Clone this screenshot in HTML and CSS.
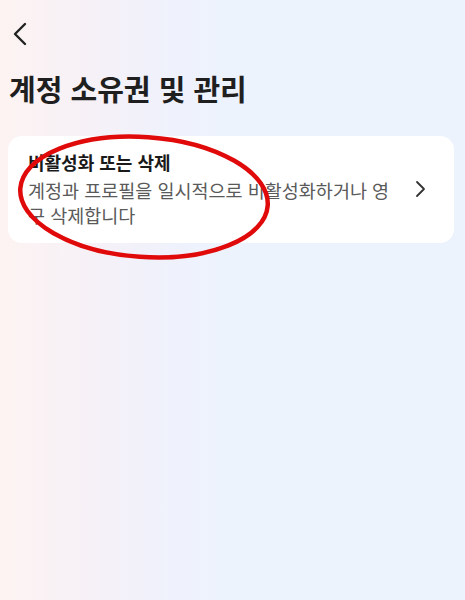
FILE: index.html
```html
<!DOCTYPE html>
<html lang="ko">
<head>
<meta charset="utf-8">
<link rel="stylesheet" href="styles.css">
</head>
<body>
<div class="page">
  <div class="topbar">
    <svg class="back" width="16" height="24" viewBox="0 0 16 24"><path d="M13 2 L3 12 L13 22" fill="none" stroke="#222" stroke-width="2.4" stroke-linecap="round" stroke-linejoin="round"/></svg>
  </div>
  <h1 class="heading">계정 소유권 및 관리</h1>
  <div class="card">
    <div class="card-text">
      <div class="card-title">비활성화 또는 삭제</div>
      <div class="card-sub">계정과 프로필을 일시적으로 비활성화하거나 영구 삭제합니다</div>
    </div>
    <svg class="chev" width="12" height="18" viewBox="0 0 12 18"><path d="M3 2 L10 9 L3 16" fill="none" stroke="#333" stroke-width="1.8" stroke-linecap="round" stroke-linejoin="round"/></svg>
  </div>
  <svg class="mark" width="465" height="600" viewBox="0 0 465 600">
    <ellipse cx="144" cy="197" rx="124" ry="60" transform="rotate(4 144 197)" fill="none" stroke="#e00a0a" stroke-width="4.5"/>
  </svg>
</div>
</body>
</html>
```
FILE: styles.css
```css
html, body {
  margin: 0;
  padding: 0;
}
body {
  width: 465px;
  height: 600px;
  overflow: hidden;
  font-family: "Noto Sans CJK KR", "Noto Sans", sans-serif;
  background: linear-gradient(90deg, #fdf3f2 0%, #f6f1f7 20%, #f0f1fb 33%, #ecf3fd 50%, #edf3fd 100%);
}
.page {
  position: relative;
  width: 465px;
  height: 600px;
}
.topbar {
  height: 68px;
  display: flex;
  align-items: center;
  padding-left: 12px;
}
.back {
  display: block;
}
.heading {
  margin: 0 0 28px 0;
  padding-left: 9px;
  font-size: 29px;
  line-height: 40px;
  font-weight: 700;
  color: #1f1f1f;
  letter-spacing: 0;
}
.card {
  margin: 0 11px 0 8px;
  background: #ffffff;
  border-radius: 14px;
  padding: 13px 26px 15px 20px;
  display: flex;
  align-items: center;
  gap: 20px;
}
.card-text {
  width: 366px;
}
.card-title {
  font-size: 18px;
  line-height: 26px;
  font-weight: 600;
  color: #1a1a1a;
}
.card-sub {
  margin-top: 3px;
  font-size: 18.5px;
  line-height: 25px;
  color: #5a5a5a;
}
.chev {
  display: block;
  flex-shrink: 0;
}
.mark {
  position: absolute;
  left: 0;
  top: 0;
  pointer-events: none;
}
```
